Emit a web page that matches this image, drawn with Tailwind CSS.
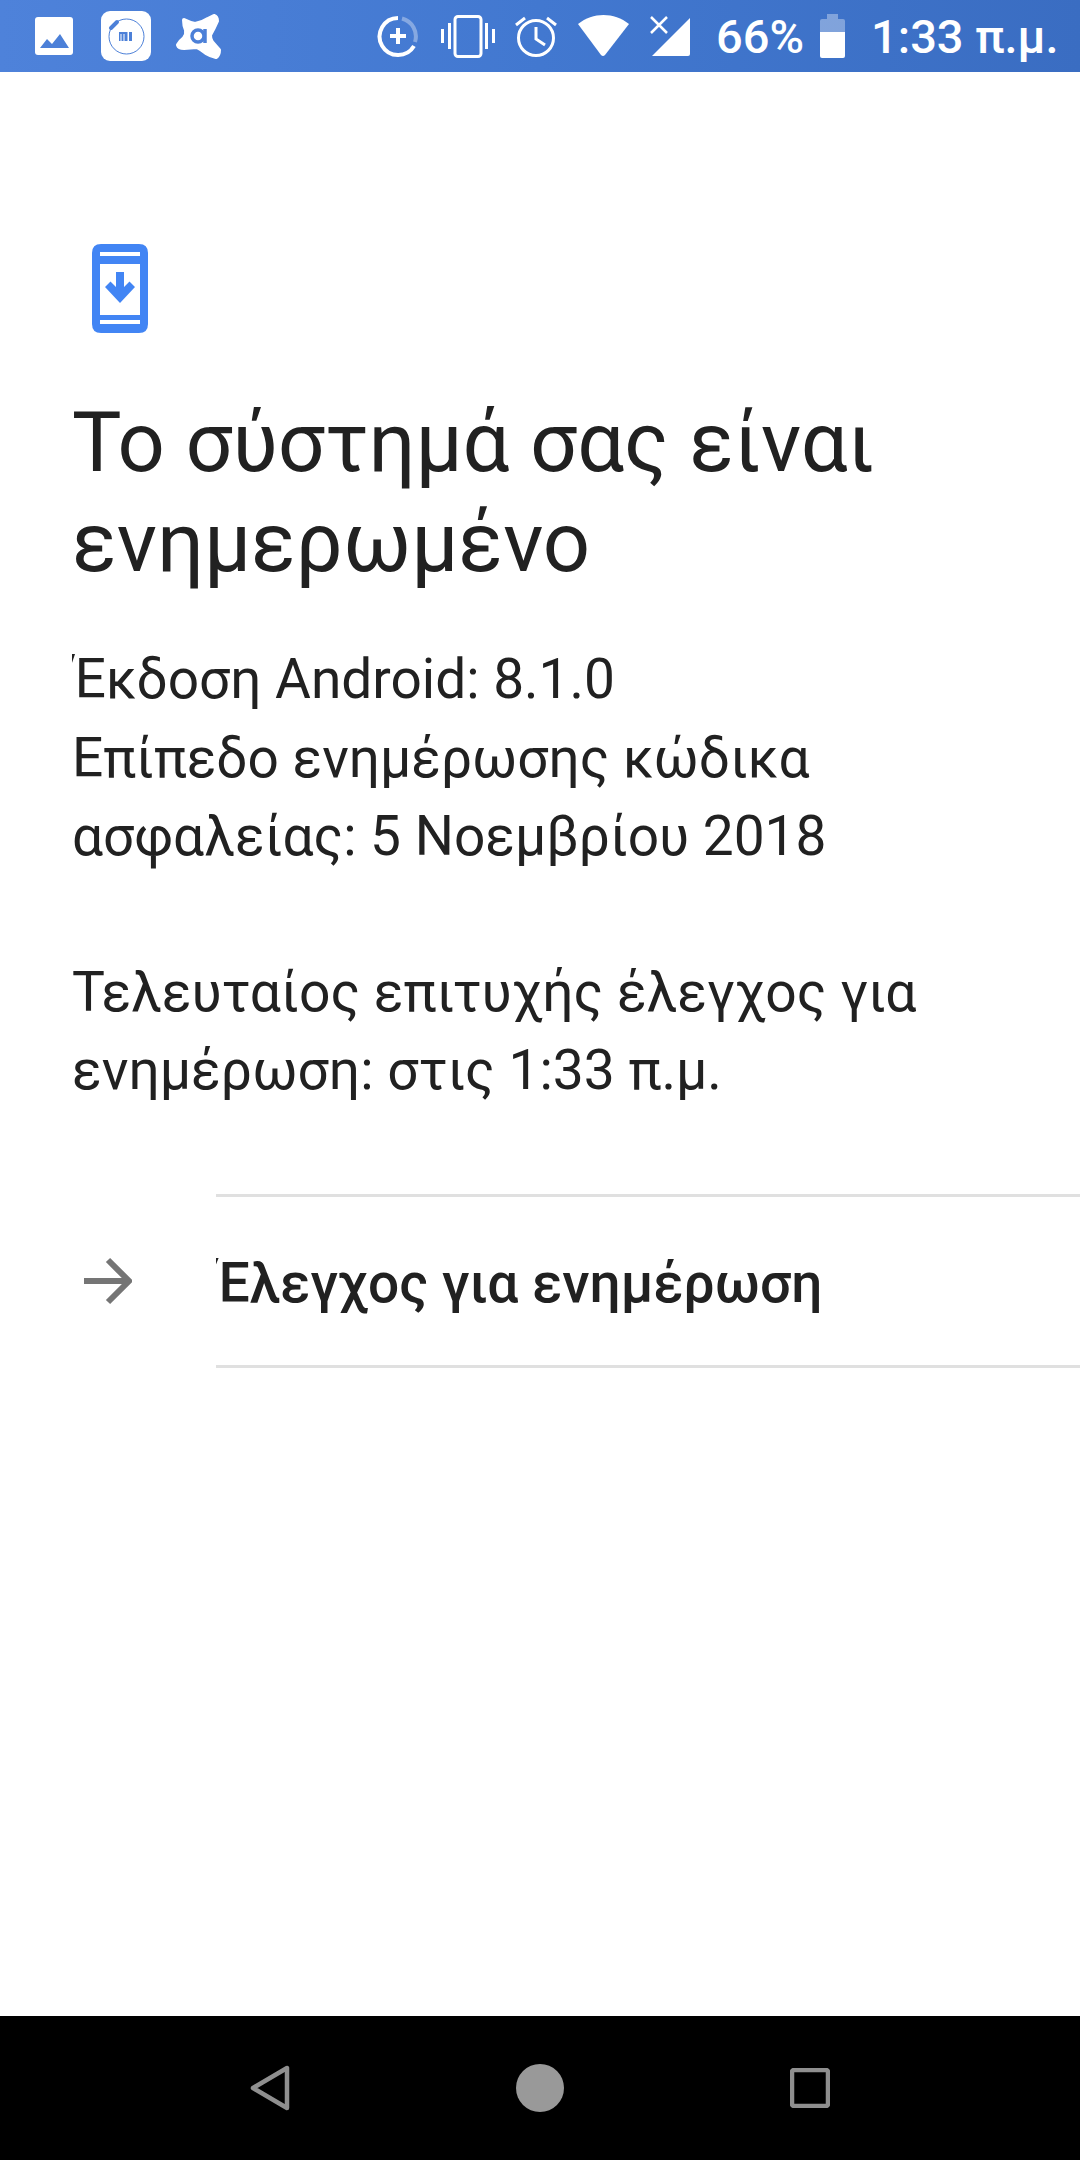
<!DOCTYPE html>
<html lang="el"><head><meta charset="utf-8">
<script src="https://cdn.jsdelivr.net/npm/@tailwindcss/browser@4"></script>
</head>
<body class="m-0 bg-white">
<div class="w-[1080px] h-[2160px] flex flex-col overflow-hidden bg-white font-['Roboto',sans-serif] text-[#212121]">
  <header class="relative h-[72px] shrink-0 flex items-center text-white bg-gradient-to-r from-[#4e82da] via-[#4278d0] to-[#3a6dc2]">
    <svg class="ml-[35px] w-[38px] h-[38px]" viewBox="0 0 38 38"><rect width="38" height="38" rx="3" fill="#fff"/><path d="M5 31l7-9 5 5 8-10 9 14z" fill="#4c80d8"/></svg>
    <svg class="ml-[28px] w-[50px] h-[50px]" viewBox="0 0 50 50"><rect width="50" height="50" rx="9" fill="#fff"/><circle cx="25.500" cy="25.500" r="17.500" fill="none" stroke="#4c80d8" stroke-width="1"/><path d="M10 17l6-6" stroke="#4c80d8" stroke-width="4" stroke-linecap="round"/><path d="M18 21h8.500v9h-3v-7h-1v7h-2v-7h-1v7h-1.500zM28 21h3v9h-3z" fill="#4c80d8"/></svg>
    <svg class="ml-[24px] w-[46px] h-[47px]" viewBox="0 0 46 47"><path d="M9 7Q15 10 20 11Q27 10 33 6L39 3Q42 4 42 8Q39 15 35 22Q35 27 37 29L44 37Q44 42 41 44Q36 43 31 40Q26 36 22 34L9 35Q4 35 3 32Q5 28 9 25Q12 21 11 17Q9 13 9 7z" fill="#fff" stroke="#fff" stroke-width="4" stroke-linejoin="round"/><circle cx="23" cy="23" r="6" fill="none" stroke="#4c80d8" stroke-width="3.500"/><path d="M30 16v14" stroke="#4c80d8" stroke-width="3.500"/></svg>
    <svg class="ml-[156px] w-[42px] h-[43px]" viewBox="0 0 42 43"><path d="M21 3A18.500 18.500 0 1 0 37 31" fill="none" stroke="#fff" stroke-width="4"/><path d="M25 3.500A18.500 18.500 0 0 1 38 27" fill="none" stroke="#fff" stroke-opacity=".35" stroke-width="4"/><path d="M21 13v16M13 21h16" stroke="#fff" stroke-width="4"/></svg>
    <svg class="ml-[22px] w-[54px] h-[43px]" viewBox="0 0 54 43"><rect x="14" y="1.500" width="26" height="40" rx="3" fill="none" stroke="#fff" stroke-width="3"/><path d="M1.500 14v14M8.500 8v26M45.500 8v26M52.500 14v14" stroke="#fff" stroke-width="3"/></svg>
    <svg class="ml-[20px] w-[42px] h-[42px]" viewBox="0 0 42 42"><circle cx="21" cy="23" r="17.500" fill="none" stroke="#fff" stroke-width="3"/><path d="M21 12v12l9 6M1 10l9-7M41 10l-9-7" fill="none" stroke="#fff" stroke-width="3"/></svg>
    <svg class="ml-[21px] w-[51px] h-[42px]" viewBox="0 0 51 42"><path d="M0 9C15-3 36-3 51 9L27 40q-2 2-4 0z" fill="#fff"/></svg>
    <svg class="ml-[21px] w-[40px] h-[40px]" viewBox="0 0 40 40"><path d="M40 2v36q0 2-2 2H2z" fill="#fff"/><path d="M1 1l16 16M17 1L1 17" stroke="#fff" stroke-width="2.500"/></svg>
    <span class="ml-[26px] text-[47px] font-medium leading-none">66%</span>
    <svg class="ml-[16px] w-[25px] h-[44px]" viewBox="0 0 25 44"><path d="M7 0h11v5h5q2 0 2 2v11H0V7q0-2 2-2h5z" fill="#fff" fill-opacity=".35"/><path d="M0 18h25v24q0 2-2 2H2q-2 0-2-2z" fill="#fff"/></svg>
    <span class="ml-[26px] text-[47px] font-medium leading-none whitespace-nowrap">1:33 π.μ.</span>
  </header>
  <main class="flex-1 flex flex-col">
    <div class="pl-[72px] pt-[172px]">
      <svg class="ml-[20px] w-[56px] h-[89px] block" viewBox="0 0 56 89"><path d="M9 0h38q9 0 9 9v71q0 9-9 9H9q-9 0-9-9V9q0-9 9-9z" fill="#4285f4"/><rect x="8" y="8" width="40" height="4" fill="#fff"/><rect x="8" y="20" width="40" height="51" fill="#fff"/><rect x="8" y="76" width="40" height="4" fill="#fff"/><path d="M24 28h8v15l5.500-5.500 5.500 5.500-15 16-15-16 5.500-5.500 5.500 5.500z" fill="#4285f4"/></svg>
      <h1 class="mt-[60px] text-[83px] leading-[100px] font-normal whitespace-nowrap">Το σύστημά σας είναι<br>ενημερωμένο</h1>
      <p class="mt-[47px] overflow-hidden text-[55px] leading-[78.500px] whitespace-nowrap">Έκδοση Android: 8.1.0<br>Επίπεδο ενημέρωσης κώδικα<br>ασφαλείας: 5 Νοεμβρίου 2018</p>
      <p class="mt-[77px] text-[55.200px] leading-[78.500px] whitespace-nowrap">Τελευταίος επιτυχής έλεγχος για<br>ενημέρωση: στις 1:33 π.μ.</p>
    </div>
    <div class="mt-[84px] ml-[216px] h-[3px] bg-[#e0e0e0]"></div>
    <div class="h-[168px] flex items-center">
      <svg class="ml-[84px] w-[48px] h-[48px]" viewBox="0 0 48 48"><path d="M0 24h44M24 3l21 21-21 21" fill="none" stroke="#757575" stroke-width="6"/></svg>
      <span class="ml-[84px] mt-[5px] overflow-hidden text-[55px] font-medium whitespace-nowrap">Έλεγχος για ενημέρωση</span>
    </div>
    <div class="ml-[216px] h-[3px] bg-[#e0e0e0]"></div>
  </main>
  <nav class="h-[144px] shrink-0 bg-black flex items-center">
    <svg class="ml-[250px] w-[40px] h-[46px]" viewBox="0 0 40 46"><path d="M37 3v40L3 23z" fill="none" stroke="#8f8f8f" stroke-width="4.500" stroke-linejoin="round"/></svg>
    <div class="ml-[226px] w-[48px] h-[48px] rounded-full bg-[#999999]"></div>
    <svg class="ml-[226px] w-[40px] h-[40px]" viewBox="0 0 40 40"><rect x="2" y="2" width="36" height="36" rx="2" fill="none" stroke="#8f8f8f" stroke-width="4.500"/></svg>
  </nav>
</div>
</body></html>
